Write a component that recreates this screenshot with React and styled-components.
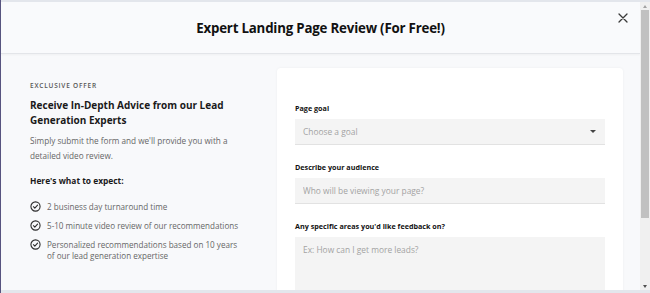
import React from "react";
import styled, { createGlobalStyle } from "styled-components";

const GlobalStyle = createGlobalStyle`
  html, body {
    margin: 0;
    padding: 0;
    height: 100%;
    overflow: hidden;
    background: #e3e6ec;
    font-family: "Open Sans", "DejaVu Sans", sans-serif;
  }
  #root {
    height: 100%;
  }
`;

const checklist = [
  "2 business day turnaround time",
  "5-10 minute video review of our recommendations",
  "Personalized recommendations based on 10 years of our lead generation expertise",
];

function CheckIcon() {
  return (
    <svg width="11" height="11" viewBox="0 0 24 24" fill="none" stroke="#2b2b2b" strokeWidth="2.4" strokeLinecap="round" strokeLinejoin="round">
      <circle cx="12" cy="12" r="10" />
      <path d="M7.5 12.5l3 3 6-6.5" />
    </svg>
  );
}

function App() {
  return (
    <>
      <GlobalStyle />
      <Page>
        <Modal>
          <Header>
            <Title>Expert Landing Page Review (For Free!)</Title>
            <Close aria-label="close">
              <svg width="10" height="10" viewBox="0 0 10 10" stroke="#3a3a3a" strokeWidth="1.3" strokeLinecap="round">
                <path d="M1 1l8 8M9 1l-8 8" />
              </svg>
            </Close>
          </Header>
          <Body>
            <Offer>
              <Eyebrow>Exclusive Offer</Eyebrow>
              <Heading>Receive In-Depth Advice from our Lead Generation Experts</Heading>
              <Text>Simply submit the form and we'll provide you with a detailed video review.</Text>
              <SubHeading>Here's what to expect:</SubHeading>
              <List>
                {checklist.map((item) => (
                  <Item key={item}>
                    <CheckIcon />
                    <span>{item}</span>
                  </Item>
                ))}
              </List>
            </Offer>
            <Card>
              <Field>
                <Label>Page goal</Label>
                <Select>
                  <Placeholder>Choose a goal</Placeholder>
                  <Caret />
                </Select>
              </Field>
              <Field>
                <Label>Describe your audience</Label>
                <Input placeholder="Who will be viewing your page?" />
              </Field>
              <Field>
                <Label>Any specific areas you'd like feedback on?</Label>
                <TextArea placeholder="Ex: How can I get more leads?" />
              </Field>
            </Card>
          </Body>
        </Modal>
        <Scrollbar>
          <ArrowButton><Arrow $dir="up" /></ArrowButton>
          <Track>
            <Thumb />
          </Track>
          <ArrowButton><Arrow $dir="down" /></ArrowButton>
        </Scrollbar>
      </Page>
    </>
  );
}

const Page = styled.div`
  height: 100%;
  box-sizing: border-box;
  padding: 2px 0 3px 0;
  border-left: 1px solid #57547f;
  display: flex;
`;

const Modal = styled.div`
  flex: 1;
  background: #f8f9fb;
  overflow: hidden;
`;

const Scrollbar = styled.div`
  width: 10px;
  background: #f0f0f0;
  display: flex;
  flex-direction: column;
`;

const ArrowButton = styled.div`
  height: 8px;
  display: flex;
  align-items: center;
  justify-content: center;
`;

const Arrow = styled.span`
  width: 0;
  height: 0;
  border-left: 2.5px solid transparent;
  border-right: 2.5px solid transparent;
  ${({ $dir }) =>
    $dir === "up" ? "border-bottom: 3px solid #a3a3a3;" : "border-top: 3px solid #505050;"}
`;

const Track = styled.div`
  flex: 1;
  padding: 0 1px;
`;

const Thumb = styled.div`
  height: 208px;
  background: #c1c1c1;
`;

const Header = styled.div`
  position: relative;
  height: 51px;
  display: flex;
  align-items: center;
  justify-content: center;
  background: #f9fafc;
  border-bottom: 1px solid #e3e5e9;
  box-shadow: 0 1px 2px rgba(0, 0, 0, 0.04);
`;

const Title = styled.h1`
  margin: 0;
  font-size: 13.3px;
  font-weight: 700;
  color: #111;
  letter-spacing: -0.2px;
`;

const Close = styled.button`
  position: absolute;
  top: 11px;
  right: 12px;
  border: 0;
  background: none;
  padding: 0;
  width: 10px;
  height: 10px;
  display: flex;
  cursor: pointer;
`;

const Body = styled.div`
  display: flex;
  padding: 14px 17px 30px 29px;
`;

const Offer = styled.div`
  flex: 1;
  padding-top: 13px;
  padding-right: 20px;
`;

const Eyebrow = styled.div`
  font-size: 6.5px;
  font-weight: 600;
  letter-spacing: 0.8px;
  text-transform: uppercase;
  color: #555;
  margin-bottom: 8px;
`;

const Heading = styled.h2`
  margin: 0 0 5px;
  font-size: 10px;
  line-height: 15px;
  font-weight: 700;
  color: #1a1a1a;
`;

const Text = styled.p`
  margin: 0 0 12px;
  font-size: 8.2px;
  line-height: 15px;
  color: #666;
`;

const SubHeading = styled.h3`
  margin: 0 0 15px;
  font-size: 8.4px;
  font-weight: 700;
  color: #1a1a1a;
`;

const List = styled.ul`
  list-style: none;
  margin: 0;
  padding: 0;
  display: flex;
  flex-direction: column;
  gap: 8px;
`;

const Item = styled.li`
  display: flex;
  align-items: flex-start;
  gap: 6px;
  font-size: 8.1px;
  line-height: 11px;
  color: #666;

  svg {
    flex-shrink: 0;
  }
  span {
    max-width: 194px;
  }
`;

const Card = styled.div`
  width: 346px;
  box-sizing: border-box;
  background: #fff;
  border-radius: 4px;
  box-shadow: 0 0 3px rgba(0, 0, 0, 0.05);
  padding: 35px 18px 24px;
  display: flex;
  flex-direction: column;
  gap: 17px;
`;

const Field = styled.div`
  display: flex;
  flex-direction: column;
`;

const Label = styled.label`
  font-size: 7.2px;
  font-weight: 700;
  color: #111;
  margin-bottom: 6px;
`;

const fieldBase = `
  box-sizing: border-box;
  width: 100%;
  background: #f4f4f4;
  border: 0;
  border-bottom: 1px solid #e2e2e2;
  font-family: "Open Sans", "DejaVu Sans", sans-serif;
  font-size: 8.4px;
  color: #333;
  padding: 0 8px;
  outline: none;
  &::placeholder {
    color: #a3a3a3;
  }
`;

const Select = styled.div`
  ${fieldBase}
  height: 26px;
  display: flex;
  align-items: center;
  justify-content: space-between;
  padding-right: 9px;
`;

const Placeholder = styled.span`
  color: #a3a3a3;
`;

const Caret = styled.span`
  width: 0;
  height: 0;
  border-left: 3px solid transparent;
  border-right: 3px solid transparent;
  border-top: 3px solid #444;
`;

const Input = styled.input`
  ${fieldBase}
  height: 26px;
`;

const TextArea = styled.textarea`
  ${fieldBase}
  height: 90px;
  padding-top: 7px;
  resize: none;
`;

export default App;
